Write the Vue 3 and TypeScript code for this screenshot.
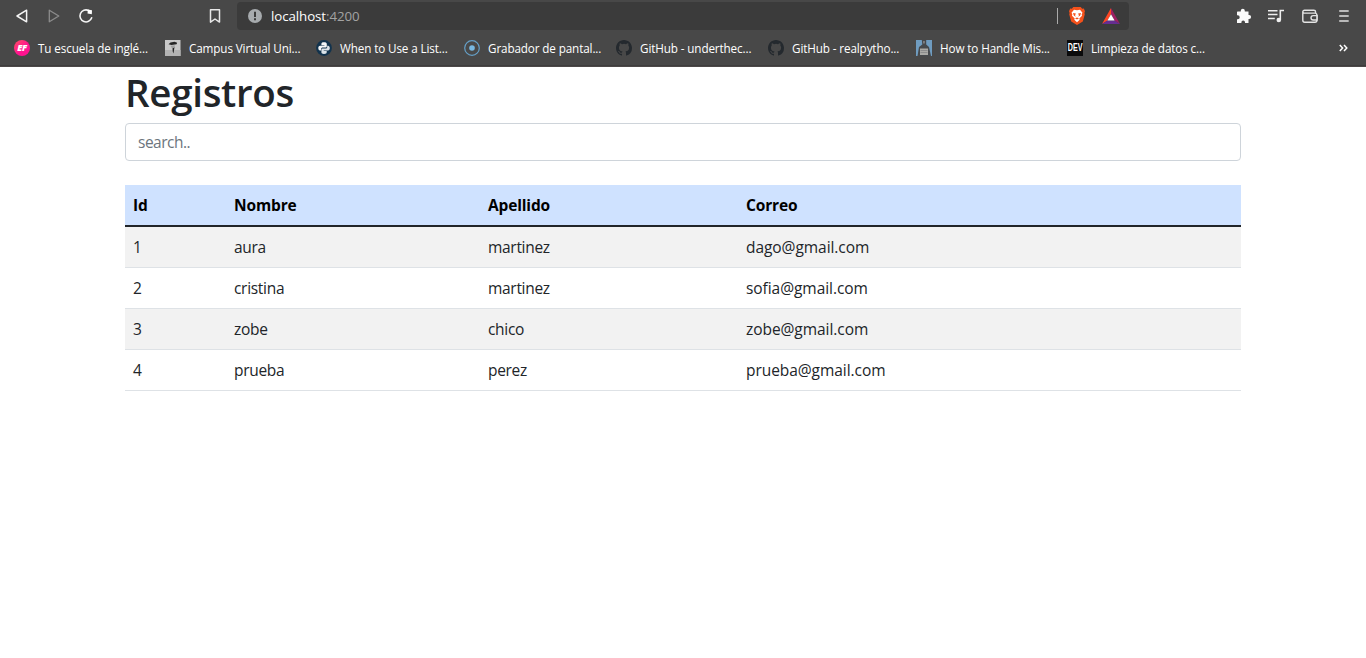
<script setup lang="ts">
import { computed, ref } from 'vue'

interface Bookmark {
  icon: string
  label: string
}

interface Registro {
  id: number
  nombre: string
  apellido: string
  correo: string
}

const bookmarks: Bookmark[] = [
  { icon: 'ef', label: 'Tu escuela de inglé...' },
  { icon: 'campus', label: 'Campus Virtual Uni...' },
  { icon: 'python', label: 'When to Use a List...' },
  { icon: 'recorder', label: 'Grabador de pantal...' },
  { icon: 'github', label: 'GitHub - underthec...' },
  { icon: 'github', label: 'GitHub - realpytho...' },
  { icon: 'statue', label: 'How to Handle Mis...' },
  { icon: 'dev', label: 'Limpieza de datos c...' },
]

const registros: Registro[] = [
  { id: 1, nombre: 'aura', apellido: 'martinez', correo: 'dago@gmail.com' },
  { id: 2, nombre: 'cristina', apellido: 'martinez', correo: 'sofia@gmail.com' },
  { id: 3, nombre: 'zobe', apellido: 'chico', correo: 'zobe@gmail.com' },
  { id: 4, nombre: 'prueba', apellido: 'perez', correo: 'prueba@gmail.com' },
]

const search = ref('')
const visibles = computed(() =>
  registros.filter((r) => `${r.nombre} ${r.apellido} ${r.correo}`.includes(search.value.toLowerCase())),
)
</script>

<template>
  <header class="browser">
    <div class="toolbar">
      <nav class="nav">
        <svg width="16" height="16" viewBox="0 0 16 16"><path d="M12.600 2.200v11.600L3 8z" fill="none" stroke="#f4f4f4" stroke-width="1.5" stroke-linejoin="round" /></svg>
        <svg width="16" height="16" viewBox="0 0 16 16"><path d="M3.3 2.200v11.600L12.800 8z" fill="none" stroke="#8c8c8c" stroke-width="1.3" stroke-linejoin="round" /></svg>
        <svg width="16" height="16" viewBox="0 0 16 16"><path d="M13.700 9.800A6 6 0 1 1 10.600 2.500" fill="none" stroke="#f4f4f4" stroke-width="1.6" stroke-linecap="round" /><path d="M9.800 1.600l4.200.7-.2 4-4.300-.8z" fill="#fff" /></svg>
        <svg class="save" width="16" height="16" viewBox="0 0 16 16"><path d="M3.500 1.800h9v12.300L8 11l-4.500 3.100z" fill="none" stroke="#e8e8e8" stroke-width="1.5" stroke-linejoin="round" /></svg>
      </nav>
      <div class="address">
        <svg width="14" height="14" viewBox="0 0 14 14"><circle cx="7" cy="7" r="7" fill="#a7abae" /><path d="M6 2.800h2v5.200H6zM6 9.300h2v2H6z" fill="#3b3b3b" /></svg>
        <span class="url">localhost<span class="port">:4200</span></span>
        <i class="divider" />
        <svg class="brave" width="16" height="18" viewBox="0 0 16 18">
          <path d="M4.300 0h7.400l1.500 1.700 1.600-.1L16 4.200l-.6 1.700.4 1.300-2 7.200L8 18l-5.800-3.600-2-7.200.4-1.300L0 4.200l1.200-2.600 1.600.1z" fill="#f4511b" />
          <path d="M5 2.700l3 .6 3-.6 2.500 3-.8 1.500.3 1.500-2.700 2.900.4 1.200L8 15.200l-2.700-2.400.4-1.200L3 8.700l.3-1.500-.8-1.500z" fill="#fff" />
          <path d="M4 5.900l2.900.6-.8 1.700.6 1.500-1.900-1.300zM12 5.900l-2.900.6.8 1.700-.6 1.500 1.900-1.300zM6 11.200l2 1.200 2-1.200-2-.8z" fill="#f4511b" />
        </svg>
        <svg class="bat" width="18" height="16" viewBox="0 0 18 16"><path d="M9 0L0 16l5.500-3.500L9 6z" fill="#ff4724" /><path d="M9 0l9 16-5.500-3.500L9 6z" fill="#9e1f63" /><path d="M0 16h18l-5.500-3.500h-7z" fill="#662d91" /><path d="M9 6.200l3.600 6.300H5.400z" fill="#fff" /></svg>
      </div>
      <div class="actions">
        <svg width="16" height="16" viewBox="0 0 16 16"><path d="M1.500 3.500h3.300V2.800a2 2 0 0 1 4 0v.7H12.500v3.500h.6a2 2 0 0 1 0 4H12.500V15H9v-.8a1.800 1.800 0 0 0-3.600 0v.8H1v-3.700h.7a2 2 0 0 0 0-4h-.7V4z" fill="#fafafa" /></svg>
        <svg width="16" height="16" viewBox="0 0 16 16"><path d="M0 2.700h9.500M0 6.600h9.500M0 10.500h6.800" stroke="#eee" stroke-width="1.500" /><path d="M12.300 12V2.500H16" fill="none" stroke="#eee" stroke-width="1.600" /><circle cx="10.800" cy="12" r="2.300" fill="#eee" /></svg>
        <svg width="16" height="16" viewBox="0 0 16 16"><path d="M13.600 5V4A1.700 1.700 0 0 0 11.900 2.300H2.500A1.700 1.700 0 0 0 .8 4v8.300A1.900 1.900 0 0 0 2.700 14.200h10.300a1.900 1.900 0 0 0 1.900-1.900V7A1.900 1.900 0 0 0 13 5.100H2.200A1.400 1.400 0 0 1 .8 4M15.200 7.600h-4a2.200 2.200 0 0 0 0 4.400h4z" fill="none" stroke="#e4e4e4" stroke-width="1.400" /></svg>
        <svg width="16" height="16" viewBox="0 0 16 16"><path d="M3.200 3h9.500M3.200 8h9.500M3.200 13h9.500" stroke="#dedede" stroke-width="1.700" /></svg>
      </div>
    </div>
    <div class="bookmarks">
      <div v-for="(b, i) in bookmarks" :key="i" class="bookmark">
        <span v-if="b.icon === 'ef'" class="favicon ef">EF</span>
        <span v-else-if="b.icon === 'dev'" class="favicon dev"><span>DEV</span></span>
        <svg v-else class="favicon" viewBox="0 0 16 16">
          <template v-if="b.icon === 'campus'">
            <path d="M0 0h15.500v16H0z" fill="#c9c9c9" />
            <path d="M0 10h15.500v6H0z" fill="#b2b2b2" />
            <path d="M3.500 4.300l2-1.800 4-.7 2.600 1-.5 1.400-5.100.8zM7.500 8l2-1-1 6.500-.8-2z" fill="#262626" />
            <path d="M5.500 5.800l4.500-.6-.5 2.300-2.500 1z" fill="#a0a0a0" />
          </template>
          <template v-else-if="b.icon === 'python'">
            <circle cx="8" cy="8" r="7.900" fill="#12334d" />
            <path d="M8 2.200c-2 0-2.600.7-2.600 1.700v1.300h3v.5H4.100C2.800 5.700 2.300 6.800 2.300 8.100s.6 2.400 1.700 2.400h1.100V9.200c0-1 .7-1.600 1.600-1.600h2.700c.8 0 1.400-.6 1.400-1.400V3.900c0-1-.9-1.700-2.800-1.700z" fill="#f3f5f6" />
            <path d="M8 14c2 0 2.700-.7 2.700-1.700V11h-3v-.5H12c1.200 0 1.800-1.100 1.800-2.400S13.200 5.700 12 5.700h-.8V7c0 1-.7 1.500-1.600 1.500H6.900c-.8 0-1.500.6-1.500 1.400v2.400C5.400 13.300 6.200 14 8 14z" fill="#dce3e8" />
          </template>
          <template v-else-if="b.icon === 'recorder'">
            <circle cx="8" cy="8" r="7.300" fill="none" stroke="#65a0c8" stroke-width="1.200" />
            <circle cx="8" cy="8" r="2.800" fill="#78b9e2" />
          </template>
          <path v-else-if="b.icon === 'github'" fill="#24292e" d="M8 0C3.580 0 0 3.580 0 8c0 3.540 2.290 6.530 5.470 7.590.4.070.55-.17.55-.38 0-.19-.01-.82-.01-1.490-2.010.37-2.530-.49-2.690-.94-.09-.23-.48-.94-.82-1.130-.28-.15-.68-.52-.01-.53.63-.01 1.080.58 1.230.82.72 1.210 1.870.87 2.330.66.07-.52.28-.87.51-1.070-1.780-.2-3.640-.89-3.640-3.950 0-.87.31-1.590.82-2.150-.08-.2-.36-1.020.08-2.120 0 0 .67-.21 2.200.82a7.640 7.640 0 0 1 4 0c1.530-1.040 2.200-.82 2.200-.82.44 1.100.16 1.920.08 2.120.51.56.82 1.270.82 2.150 0 3.070-1.870 3.750-3.650 3.950.29.25.54.73.54 1.480 0 1.070-.01 1.930-.01 2.200 0 .21.15.46.55.38A8 8 0 0 0 16 8c0-4.420-3.580-8-8-8z" />
          <template v-else>
            <path d="M0 0h16v16H0z" fill="#6f9cc0" />
            <path d="M5.800 0h4.400v4.500L13 7l2 9H1.500L3 7l3.300-2.500z" fill="#46494c" />
            <path d="M4 8.500h8V15H4z" fill="#aaa9a5" />
            <path d="M4.500 10.500h7M4.500 12.500h7" stroke="#77797a" stroke-width=".6" />
            <path d="M7.200 1h1.500v2.500H7.200z" fill="#8b8d8f" />
          </template>
        </svg>
        <span class="label">{{ b.label }}</span>
      </div>
      <svg class="more" width="9" height="8" viewBox="0 0 9 8"><path d="M.8 1L3.600 4 .8 7M5 1l2.800 3L5 7" fill="none" stroke="#fff" stroke-width="1.500" /></svg>
    </div>
  </header>

  <main class="container">
    <h1>Registros</h1>
    <input v-model="search" type="text" placeholder="search.." />
    <table>
      <colgroup>
        <col class="c-id" />
        <col class="c-nombre" />
        <col class="c-apellido" />
        <col />
      </colgroup>
      <thead>
        <tr>
          <th>Id</th>
          <th>Nombre</th>
          <th>Apellido</th>
          <th>Correo</th>
        </tr>
      </thead>
      <tbody>
        <tr v-for="r in visibles" :key="r.id">
          <td>{{ r.id }}</td>
          <td>{{ r.nombre }}</td>
          <td>{{ r.apellido }}</td>
          <td class="correo">{{ r.correo }}</td>
        </tr>
      </tbody>
    </table>
  </main>
</template>

<style>
body {
  background: #fff;
  font-family: 'Segoe UI', 'Open Sans', 'Noto Sans', sans-serif;
}
</style>

<style scoped>
* {
  box-sizing: border-box;
}
svg {
  display: block;
  flex: none;
}
.browser {
  height: 67px;
  background: #484848;
  border-bottom: 1px solid #4c4848;
  box-shadow: inset 0 -1px #3e3d3d;
  color: #fff;
}
.toolbar {
  display: flex;
  height: 32px;
  align-items: center;
}
.nav {
  display: flex;
  width: 237px;
  padding-left: 14px;
  gap: 16px;
}
.save {
  margin-left: 97px;
}
.address {
  display: flex;
  align-items: center;
  width: 892px;
  height: 28px;
  padding: 0 9px 0 11px;
  border-radius: 4px;
  background: #3b3b3b;
}
.url {
  margin-left: 9px;
  font-size: 13.3px;
  line-height: 18px;
  letter-spacing: -0.08px;
}
.port {
  color: #a3a3a3;
}
.divider {
  width: 1px;
  height: 16px;
  margin-left: auto;
  background: #aaa;
}
.brave {
  margin-left: 11px;
}
.bat {
  margin-left: 17px;
}
.actions {
  display: flex;
  gap: 18px;
  margin-left: 107px;
}
.actions svg:nth-child(2) {
  margin-left: -2px;
}
.bookmarks {
  display: grid;
  grid-template-columns: 151px 151px 148px 152px 152px 148px 151px 272px 9px;
  align-items: center;
  height: 32px;
  padding-left: 14px;
}
.bookmark {
  display: flex;
  align-items: center;
  gap: 8px;
  font-size: 11.7px;
  line-height: 16px;
  letter-spacing: -0.12px;
  white-space: nowrap;
}
.label {
  padding-bottom: 1px;
}
.favicon {
  flex: none;
  width: 16px;
  height: 16px;
}
.ef {
  border-radius: 50%;
  background: linear-gradient(135deg, #ff5260, #ff1390 55%);
  font: italic 800 9px/16px 'Open Sans', sans-serif;
  letter-spacing: -0.3px;
  text-align: center;
}
.dev {
  display: flex;
  align-items: center;
  justify-content: center;
  background: #0b0b0c;
  font: bold 10px/16px 'Liberation Sans', sans-serif;
}
.dev span {
  transform: scale(0.72, 1.1);
}
.container {
  width: 1116px;
  margin: 0 auto;
  color: #212529;
}
h1 {
  margin: 0;
  padding: 1px 0 7px;
  font-size: 38.5px;
  font-weight: 550;
  line-height: 48px;
  letter-spacing: -0.3px;
}
input {
  display: block;
  width: 100%;
  height: 38px;
  padding: 6px 12px;
  border: 1px solid #ced4da;
  border-radius: 4px;
  outline: 0;
  background: #fff;
  color: #212529;
  font: inherit;
  font-size: 15.5px;
  letter-spacing: -0.5px;
}
input::placeholder {
  color: #6c757d;
  opacity: 1;
}
table {
  width: 100%;
  margin-top: 24px;
  border-collapse: collapse;
  table-layout: fixed;
  font-size: 15.5px;
  line-height: 24px;
  letter-spacing: -0.3px;
}
.c-id {
  width: 101px;
}
.c-nombre {
  width: 254px;
}
.c-apellido {
  width: 258px;
}
th,
td {
  padding: 8px;
  border-bottom: 1px solid #dee2e6;
  text-align: left;
}
thead tr {
  background: #cfe2ff;
  color: #000;
}
th {
  border-bottom: 2px solid #212529;
  font-weight: 700;
  letter-spacing: -0.15px;
}
.correo {
  letter-spacing: -0.06px;
}
tbody tr:nth-child(odd) {
  background: #f2f2f2;
}
</style>
